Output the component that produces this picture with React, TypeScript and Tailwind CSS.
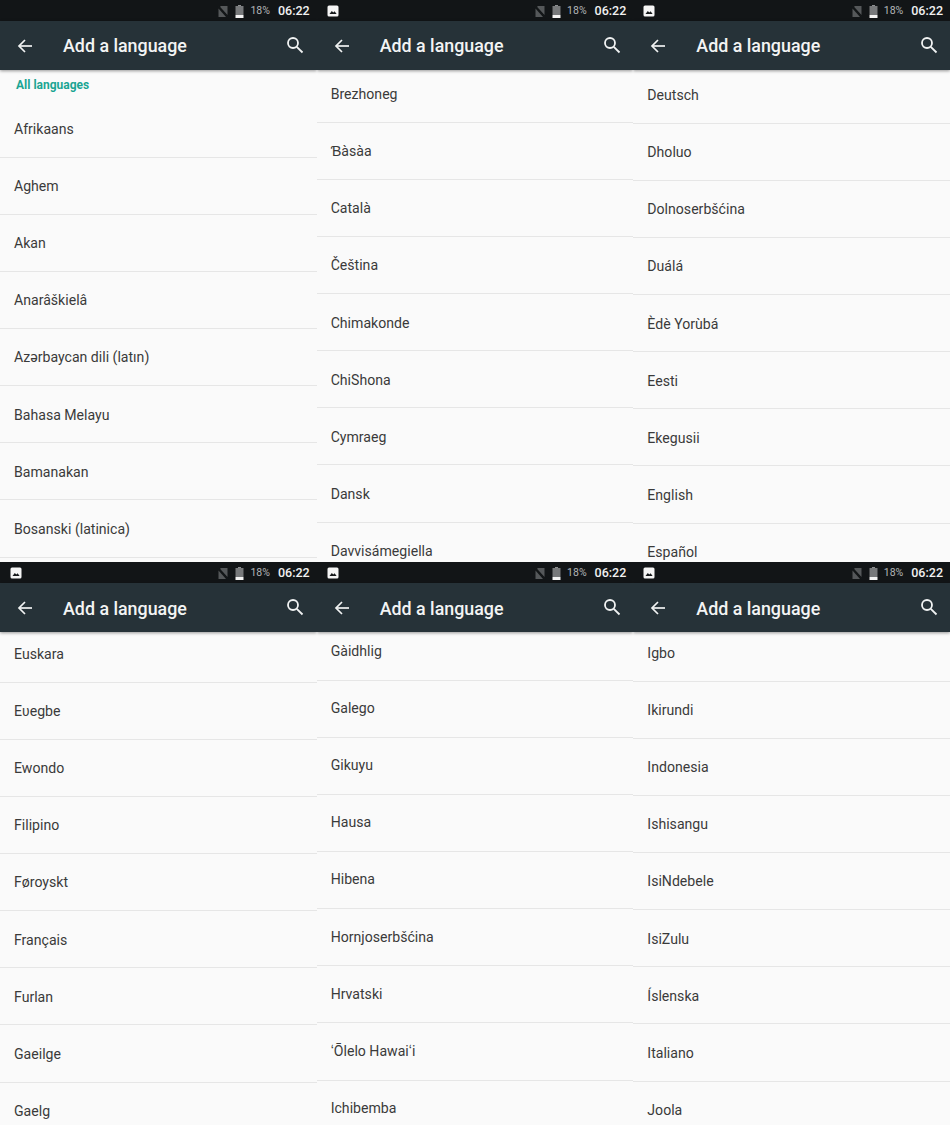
type Panel = { offset: string; height: string; rowPad: string; titlePad: string; barPad: string; label?: boolean; image: boolean; rows: string[] };

const panels: Panel[] = [
  { offset: "mt-0", height: "h-[562px]", rowPad: "pt-[2px]", titlePad: "pt-[2px]", barPad: "pr-[13px]", label: true, image: false, rows: ["Afrikaans", "Aghem", "Akan", "Anarâškielâ", "Azərbaycan dili (latın)", "Bahasa Melayu", "Bamanakan", "Bosanski (latinica)"] },
  { offset: "-mt-[4.4px]", height: "h-[562px]", rowPad: "pt-[2px]", titlePad: "pt-[2px]", barPad: "pr-[12px]", image: true, rows: ["Brezhoneg", "Ɓàsàa", "Català", "Čeština", "Chimakonde", "ChiShona", "Cymraeg", "Dansk", "Davvisámegiella"] },
  { offset: "-mt-[3.4px]", height: "h-[562px]", rowPad: "pt-[2px]", titlePad: "pt-[2px]", barPad: "pr-[12px]", image: true, rows: ["Deutsch", "Dholuo", "Dolnoserbšćina", "Duálá", "Èdè Yorùbá", "Eesti", "Ekegusii", "English", "Español"] },
  { offset: "-mt-[6.5px]", height: "h-[563px]", rowPad: "pt-[2px]", titlePad: "pt-[3px]", barPad: "pr-[13px]", image: true, rows: ["Euskara", "Eʋegbe", "Ewondo", "Filipino", "Føroyskt", "Français", "Furlan", "Gaeilge", "Gaelg"] },
  { offset: "-mt-[8.5px]", height: "h-[563px]", rowPad: "pt-0", titlePad: "pt-[3px]", barPad: "pr-[12px]", image: true, rows: ["Gàidhlig", "Galego", "Gikuyu", "Hausa", "Hibena", "Hornjoserbšćina", "Hrvatski", "ʻŌlelo Hawaiʻi", "Ichibemba"] },
  { offset: "-mt-[7.5px]", height: "h-[563px]", rowPad: "pt-[2px]", titlePad: "pt-[3px]", barPad: "pr-[12px]", image: true, rows: ["Igbo", "Ikirundi", "Indonesia", "Ishisangu", "IsiNdebele", "IsiZulu", "Íslenska", "Italiano", "Joola"] },
];

function ImageIcon() {
  return (
    <svg width="12" height="12" viewBox="0 0 12 12">
      <rect x="0.5" y="0.5" width="11" height="11" rx="1.5" fill="#f5f5f5" />
      <path d="M2.5 9 L4.8 6 L6.3 7.6 L7.6 6.2 L9.6 9 Z" fill="#15181a" />
    </svg>
  );
}

function NoSim() {
  return (
    <svg width="12" height="13" viewBox="0 0 12 13">
      <path d="M4 1 H10.5 V10 L3 1.8 Z" fill="#55585a" />
      <path d="M1.5 3.6 L9 12 H1.5 Z" fill="#55585a" />
      <path d="M0.8 1 L11 12.2" stroke="#15181a" strokeWidth="0.9" />
    </svg>
  );
}

function Battery() {
  return (
    <svg width="9" height="13" viewBox="0 0 9 13">
      <rect x="3" y="0" width="3" height="1.5" fill="#8c8e90" />
      <rect x="0.5" y="1" width="8" height="9" fill="#77797b" />
      <rect x="0.5" y="10" width="8" height="3" fill="#f4f4f4" />
    </svg>
  );
}

function BackArrow() {
  return (
    <svg width="16" height="16" viewBox="0 0 16 16" fill="none" stroke="#f1f3f3" strokeWidth="1.7">
      <path d="M15 8 H2" />
      <path d="M8 2 L2 8 L8 14" />
    </svg>
  );
}

function SearchIcon() {
  return (
    <svg className="mb-[2px]" width="18" height="18" viewBox="0 0 18 18" fill="none" stroke="#f1f3f3" strokeWidth="1.8">
      <circle cx="7" cy="7" r="5" />
      <path d="M10.8 10.8 L16.5 16.5" />
    </svg>
  );
}

export default function App() {
  return (
    <div className="grid w-[950px] grid-cols-3 font-['Roboto',sans-serif]">
      {panels.map((p) => (
        <div key={p.rows[0]} className={`flex flex-col overflow-hidden bg-[#fafafa] ${p.height}`}>
          <div className="flex h-[21px] shrink-0 items-center justify-between bg-[#121517] pl-[10px] pr-[7px] pt-px">
            <div className="flex w-[12px] items-center">{p.image && <ImageIcon />}</div>
            <div className="flex items-center">
              <NoSim />
              <span className="ml-[6px] flex"><Battery /></span>
              <span className="ml-[6px] text-[10.5px] text-[#b4b6b7]">18%</span>
              <span className="ml-[8px] text-[12.5px] font-medium text-[#f1f1f1]">06:22</span>
            </div>
          </div>
          <div className={`relative z-10 flex h-[49px] shrink-0 items-center bg-[#263238] pl-[17px] shadow-[0_1px_3px_rgba(0,0,0,0.4)] ${p.barPad}`}>
            <BackArrow />
            <span className={`ml-[30px] flex-1 text-[17.85px] font-medium text-[#f3f4f4] ${p.titlePad}`}>Add a language</span>
            <SearchIcon />
          </div>
          <div className={`flex flex-col ${p.offset}`}>
            {p.label && (
              <div className="flex h-[30.5px] items-start pl-[16px] pt-[8px] text-[12px] font-bold leading-[15px] text-[#1ba593]">All languages</div>
            )}
            {p.rows.map((r) => (
              <div key={r} className={`flex h-[57.14px] shrink-0 items-center border-b border-[#e6e6e6] pl-[14px] text-[14.1px] text-[#3a3a3a] ${p.rowPad}`}>
                {r}
              </div>
            ))}
          </div>
        </div>
      ))}
    </div>
  );
}
